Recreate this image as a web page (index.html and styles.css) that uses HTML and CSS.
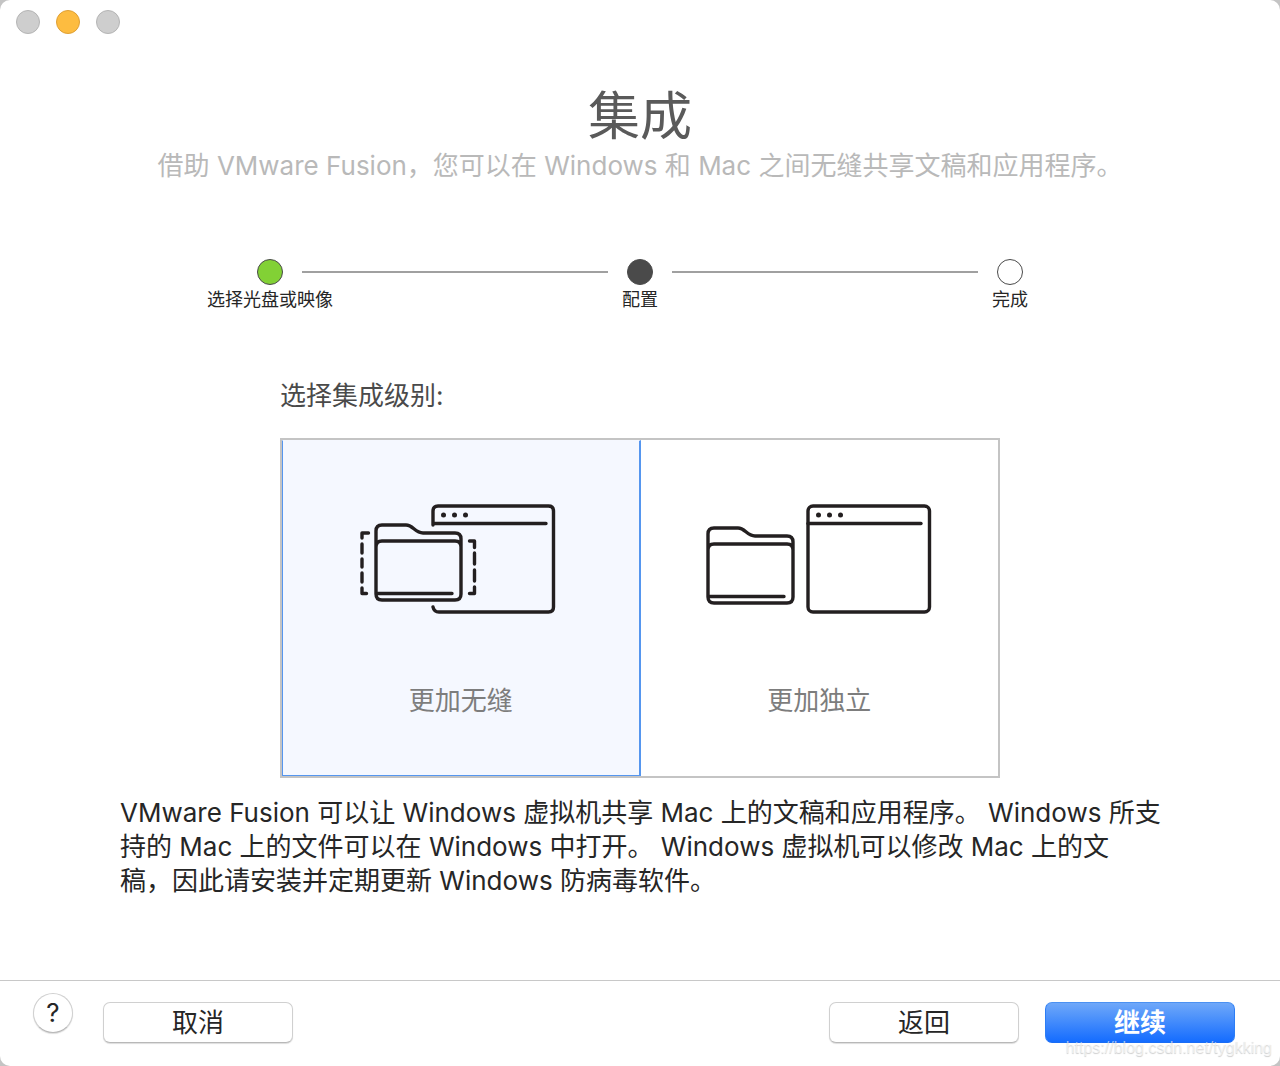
FILE: index.html
```html
<!doctype html>
<html lang="zh-CN">
<head>
	<meta charset="utf-8">
	<meta name="viewport" content="width=device-width, initial-scale=1.0">
	<title>集成</title>
	<link rel="stylesheet" href="styles.css">
</head>

<body>
	<form class="window">
		<div class="titlebar">
			<button type="button" class="light" aria-label="关闭" disabled></button>
			<button type="button" class="light minimize" aria-label="最小化"></button>
			<button type="button" class="light" aria-label="缩放" disabled></button>
		</div>

		<div class="header">
			<h1>集成</h1>
			<p>借助 VMware Fusion，您可以在 Windows 和 Mac 之间无缝共享文稿和应用程序。</p>
		</div>

		<ol class="steps">
			<li class="done"><span class="dot"></span>选择光盘或映像</li>
			<li class="current"><span class="dot"></span>配置</li>
			<li><span class="dot"></span>完成</li>
		</ol>

		<fieldset class="level">
			<legend>选择集成级别:</legend>
			<div class="options">
				<input type="radio" name="level" id="seamless" checked>
				<label for="seamless">
					<svg width="230" height="140" viewBox="12 0 230 140">
						<!-- window behind the folder -->
						<path d="M99 35V21q0-5 5-5h110.500q5 0 5 5v96q0 5-5 5H105q-5 0-6-5M99 33.500H212"/>
						<g class="dots"><circle cx="109.500" cy="25" r="2.500"/><circle cx="120.500" cy="25" r="2.500"/><circle cx="131.500" cy="25" r="2.500"/></g>
						<!-- folder -->
						<path d="M42 104V41q0-6 6-6h24c7 0 9 8 17 8h32q6 0 6 6v55q0 6-6 6H48q-6 0-6-6M42 57q0-6 6-6h73q6 0 6 6M42 103.500H118"/>
						<!-- dashed outline -->
						<path d="M34.500 43H28v5M28 54v9M28 69v8M28 83v9M28 98v5.500h4.500M135.500 51h5v6.500M140.500 63v11M140.500 80v11M140.500 97v6.500h-5"/>
					</svg>
					<span>更加无缝</span>
				</label>
				<input type="radio" name="level" id="isolated">
				<label for="isolated">
					<svg width="230" height="140" viewBox="0 0 230 140">
						<path d="M4 107V44q0-6 6-6h24c7 0 9 8 17 8h32q6 0 6 6v55q0 6-6 6H10q-6 0-6-6M4 60q0-6 6-6h73q6 0 6 6M4 106.500H80"/>
						<rect x="104" y="16" width="121.500" height="106" rx="5"/>
						<path d="M104 33.500H217"/>
						<g class="dots"><circle cx="114.500" cy="25" r="2.500"/><circle cx="125.500" cy="25" r="2.500"/><circle cx="136.500" cy="25" r="2.500"/></g>
					</svg>
					<span>更加独立</span>
				</label>
			</div>
		</fieldset>

		<p class="description">VMware Fusion 可以让 Windows 虚拟机共享 Mac 上的文稿和应用程序。 Windows 所支<br>持的 Mac 上的文件可以在 Windows 中打开。 Windows 虚拟机可以修改 Mac 上的文<br>稿，因此请安装并定期更新 Windows 防病毒软件。</p>

		<div class="footer">
			<button type="button" class="help" aria-label="帮助">?</button>
			<button type="button" class="btn">取消</button>
			<button type="button" class="btn back">返回</button>
			<button type="submit" class="btn primary">继续</button>
			<span class="watermark">https://blog.csdn.net/tygkking</span>
		</div>
	</form>
</body>
</html>
```
FILE: styles.css
```css
* {
	box-sizing: border-box;
}
body {
	margin: 0;
	background: #c4c4c4;
	color: #262626;
	font: 26px/34px Inter, "Noto Sans CJK SC", sans-serif;
}
h1, p, ol, fieldset, legend {
	margin: 0;
	padding: 0;
}
button {
	padding: 0;
	font: inherit;
	color: inherit;
}

.window {
	display: flex;
	flex-direction: column;
	min-height: 100vh;
	background: #fff;
	border-radius: 10px;
}

/* Title bar */
.titlebar {
	display: flex;
	gap: 16px;
	padding: 10px 16px;
}
.light {
	width: 24px;
	height: 24px;
	border: 1px solid #b5b5b5;
	border-radius: 50%;
	background: #cecece;
}
.minimize {
	border-color: #dfa035;
	background: #fdbc40;
}

.header {
	padding-top: 41px;
	text-align: center;
}
.header h1 {
	color: #5a5a5a;
	font-size: 52px;
	line-height: 64px;
	font-weight: 400;
}
.header p {
	color: #b9b9b9;
}

/* Progress */
.steps {
	display: flex;
	justify-content: center;
	margin-top: 76px;
	list-style: none;
	font-size: 18px;
	line-height: 26px;
}
.steps li {
	position: relative;
	display: flex;
	flex-direction: column;
	align-items: center;
	gap: 2px;
	width: 370px;
}
.steps li + li:before {
	content: "";
	position: absolute;
	top: 12px;
	left: -153px;
	width: 306px;
	height: 2px;
	background: #a0a0a0;
}
.dot {
	width: 26px;
	height: 26px;
	border: 1px solid #4a4a4a;
	border-radius: 50%;
}
.done .dot {
	background: #82d135;
}
.current .dot {
	background: #4a4a4a;
}

/* Integration level */
.level {
	width: 720px;
	max-width: 100%;
	margin: 66px auto 0;
	border: 0;
}
.level legend {
	color: #4a4a4a;
}
.options {
	display: flex;
	margin-top: 25px;
	border: 2px solid #c4c4c4;
}
.options input {
	position: absolute;
	opacity: 0;
}
.options label {
	flex: 1;
	display: flex;
	flex-direction: column;
	align-items: center;
	gap: 54px;
	height: 336px;
	padding-top: 49px;
	border: 1px solid transparent;
	border-right-width: 2px;
	color: #7d7d7d;
}
.options label:last-child {
	border-right-width: 1px;
}
.options input:checked + label {
	border-color: #5596ef;
	border-top-color: transparent;
	background: #f5f8ff;
}
.options svg {
	fill: none;
	stroke: #231f20;
	stroke-width: 3.4;
	stroke-linecap: round;
	stroke-linejoin: round;
}
.options .dots {
	fill: #231f20;
	stroke: none;
}

.description {
	width: 1044px;
	max-width: 100%;
	margin: 18px auto;
	padding-left: 2px;
}

/* Buttons */
.footer {
	position: relative;
	display: flex;
	align-items: flex-start;
	height: 86px;
	margin-top: auto;
	padding: 21px 45px 0 33px;
	border-top: 1px solid #c8c8c8;
}
.btn {
	width: 190px;
	height: 41px;
	border: 1px solid #d0d0d0;
	border-bottom-color: #b8b8b8;
	border-radius: 7px;
	background: #fff;
	box-shadow: 0 1px 1px #ddd;
}
.help {
	width: 40px;
	height: 40px;
	margin: -9px 30px 0 0;
	border: 1px solid #d0d0d0;
	border-bottom-color: #b8b8b8;
	border-radius: 50%;
	background: #fff;
	box-shadow: 0 1px 1px #ddd;
}
.back {
	margin-left: auto;
}
.primary {
	margin-left: 26px;
	border-color: #4b91f2 #2c7df5 #1a6df5;
	background: linear-gradient(#6fa8f9, #146cff);
	box-shadow: none;
	color: #fff;
	font-weight: 600;
}
.watermark {
	position: absolute;
	right: 8px;
	bottom: 6px;
	color: rgba(255, 255, 255, 0.6);
	font: 16px/24px "Liberation Sans", sans-serif;
	text-shadow: 0 1px 1px rgba(0, 0, 0, 0.2);
}
```
